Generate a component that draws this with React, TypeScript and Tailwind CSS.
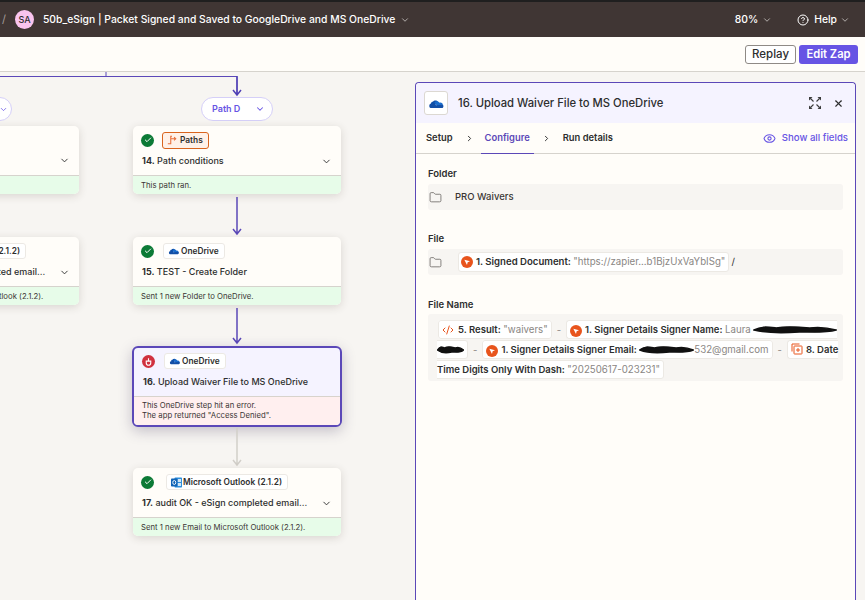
import { ChevronDown, ChevronRight, CircleHelp, CodeXml, Eye, Folder, Check, X } from 'lucide-react'
import type { ReactNode } from 'react'

const font = { fontFamily: 'Inter, "Liberation Sans", sans-serif' }

function OneDriveIcon({ size = 12 }: { size?: number }) {
  return (
    <svg width={size} height={size} viewBox="0 0 24 24" className="shrink-0">
      <path d="M9 16 14 9.500c-1.500-2.500-5.500-2.600-7.200.2C6.300 9.600 5.500 9.800 5 10.300 4.200 11 3.800 12 3.900 13L9 16Z" fill="#0f4fa8" />
      <path d="M9 10.500c1.800-2.400 5.700-2.600 7.400.4 2.200-.6 4.300.8 4.600 2.900L14 17 9 10.500Z" fill="#1a6ccb" />
      <path d="M3.500 12.500C1.500 13.500 1 17.500 3.800 18.500H19.500c1.500 0 3.200-1.800 1.800-4.800L12 14.500 3.500 12.500Z" fill="#134fa6" />
    </svg>
  )
}

function OutlookIcon() {
  return (
    <svg width={11} height={13} viewBox="0 0 22 26" className="shrink-0">
      <rect x="7" y="3" width="15" height="20" rx="1.500" fill="#2f8fdc" />
      <path d="M13 6h7v6h-7zM13 14h7v6h-7z" fill="#cfe6f8" />
      <rect x="0" y="5" width="13" height="16" rx="1.500" fill="#0f63b5" />
      <ellipse cx="6.500" cy="13" rx="3" ry="4" fill="none" stroke="#fff" strokeWidth="1.800" />
    </svg>
  )
}

function PathsIcon() {
  return (
    <svg width="10" height="10" viewBox="0 0 12 12" fill="none" stroke="#e8703c" strokeWidth="1.300" className="shrink-0">
      <path d="M1 10.500h3.500M4.500 11V1.500h1.500M4.500 4.500h6M8.500 2.500l2 2-2 2" />
    </svg>
  )
}

function ExpandIcon() {
  return (
    <svg width="12" height="12" viewBox="0 0 12 12" fill="#3a3a3a" stroke="#3a3a3a" strokeWidth="1.100" className="ml-auto shrink-0">
      <path strokeWidth="0" d="M0 0h3.500L0 3.500ZM12 0v3.500L8.500 0ZM0 12V8.500L3.500 12ZM12 12H8.500L12 8.500Z" />
      <path fill="none" d="M1.500 1.500 4.500 4.500M10.500 1.500 7.500 4.500M1.500 10.500 4.500 7.500M10.500 10.500 7.500 7.500" />
    </svg>
  )
}

function LayersIcon() {
  return (
    <svg width="12" height="12" viewBox="0 0 12 12" fill="none" stroke="#e8541c" strokeWidth="1" className="inline-block align-[-2px] mr-[3px]">
      <path d="M1 8.500V1h7.500" />
      <rect x="3" y="3" width="8" height="8" rx="0.500" />
      <path d="M7 5v4M5 7h4" />
    </svg>
  )
}

function ErrorIcon() {
  return (
    <span className="w-[13px] h-[13px] rounded-full bg-[#d0313f] flex items-center justify-center shrink-0">
      <svg width="9" height="9" viewBox="0 0 12 12" fill="none" stroke="#fff" strokeWidth="1.500">
        <path d="M3 6V4.500M6 5V1.500M9 6V4.500M3 5.500V8c0 1.800 1.300 3 3 3s3-1.200 3-3V5.500H3Z" />
      </svg>
    </span>
  )
}

function ZapierBadge() {
  return (
    <span className="inline-flex w-[12px] h-[12px] rounded-full bg-[#e8541c] items-center justify-center align-[-2px] mr-[3px]">
      <svg width="8" height="8" viewBox="0 0 12 12">
        <path d="M2 2.500 10.500 5 7 6.500 6 10.500Z" fill="#fff" />
      </svg>
    </span>
  )
}

function StatusOk() {
  return (
    <span className="w-[13px] h-[13px] rounded-full bg-[#0c7a36] flex items-center justify-center shrink-0">
      <Check size={8} strokeWidth={3} className="text-white" />
    </span>
  )
}

function Scribble({ width }: { width: number }) {
  return (
    <svg width={width} height="9" viewBox="0 0 80 9" preserveAspectRatio="none" className="inline-block align-[-1px]">
      <path d="M1 5C8 1 14 2 22 3 32 1 44 2 54 3 62 2 72 3 79 5 70 8 56 7 44 7 30 8 12 8 1 5Z" fill="#111" stroke="#111" strokeWidth="1.500" />
    </svg>
  )
}

function Pill({ icon, label }: { icon: ReactNode; label: string }) {
  return (
    <span className="h-[16px] pl-[4px] pr-[5px] flex items-center gap-[1px] rounded-[3px] border border-[#ece9e4] bg-white text-[8.350px] font-semibold text-[#2d2e2e] whitespace-nowrap">
      {icon}
      {label}
    </span>
  )
}

type NodeProps = {
  left: number
  top: number
  num: string
  title: string
  app: ReactNode
  status?: ReactNode
  chevron?: boolean
  foot: ReactNode
  tone?: 'ok' | 'error'
}

function StepCard({ left, top, num, title, app, status, chevron, foot, tone = 'ok' }: NodeProps) {
  const isError = tone === 'error'
  return (
    <div
      className={
        isError
          ? 'absolute w-[210px] h-[81px] rounded-[6px] border-2 border-[#5b48b8] bg-[#f5f3ff] shadow-[0_4px_14px_rgba(60,50,90,0.28)] overflow-hidden flex flex-col'
          : 'absolute w-[208px] h-[68px] rounded-[5px] bg-[#fffdf9] shadow-[0_2px_8px_rgba(60,50,40,0.16)] overflow-hidden flex flex-col'
      }
      style={{ left, top }}
    >
      <div className="flex-1 px-[8px] min-h-0">
        <div className={isError ? 'flex items-center gap-[9px] mt-[4px] h-[18px]' : 'flex items-center gap-[9px] mt-[6px] h-[16px]'}>
          {status ?? <StatusOk />}
          {app}
        </div>
        <div className={`flex items-center justify-between pl-[1px] pr-[1px] text-[9px] font-medium text-[#2d2e2e] leading-[12px] whitespace-nowrap ${isError ? 'mt-[6px]' : 'mt-[7px]'}`}>
          <span>
            <b className="font-bold">{num}</b> {title}
          </span>
          {chevron && <ChevronDown size={11} strokeWidth={2} className="text-[#2d2e2e]" />}
        </div>
      </div>
      <div
        className={
          isError
            ? 'h-[29px] border-t border-[#d8d3cc] bg-[#ffefef] px-[8px] pt-[3px] text-[7.750px] leading-[10px] text-[#3a3534]'
            : 'h-[19px] border-t border-[#d6d3cd] bg-[#e7fce9] px-[8px] pt-[1px] flex items-center text-[7.750px] text-[#3a3534] whitespace-nowrap'
        }
      >
        <div>{foot}</div>
      </div>
    </div>
  )
}

function Connector({ x, y1, y2, color }: { x: number; y1: number; y2: number; color: string }) {
  return (
    <svg className="absolute left-0 top-0 overflow-visible" width="1" height="1">
      <path d={`M${x} ${y1}V${y2}M${x - 4} ${y2 - 5}L${x} ${y2}L${x + 4} ${y2 - 5}`} fill="none" stroke={color} strokeWidth="1.500" />
    </svg>
  )
}

function Token({ children }: { children: ReactNode }) {
  return (
    <span className="border border-[#ece9e4] bg-white rounded-[3px] px-[3px] py-[3px] text-[#2d2e2e] font-medium">
      {children}
    </span>
  )
}

function Value({ children }: { children: ReactNode }) {
  return <span className="font-normal text-[9.700px] text-[#8a8683]">{children}</span>
}

function FieldLabel({ children }: { children: ReactNode }) {
  return <div className="text-[9.500px] font-semibold text-[#2d2e2e] leading-[12px] mb-[4px]">{children}</div>
}

export default function App() {
  return (
    <div className="w-[865px] h-[600px] overflow-hidden flex flex-col bg-[#f7f5f2]" style={font}>
      {/* Top bar */}
      <header className="h-[37px] shrink-0 bg-[#403634] border-t-2 border-[#1f1f1f] flex items-center text-white">
        <span className="ml-[2px] text-[#a39c9a] text-[11px]">/</span>
        <span className="ml-[9px] w-[19px] h-[19px] rounded-full bg-[#f9c4ee] text-[#2d2e2e] text-[9px] font-medium flex items-center justify-center">SA</span>
        <span className="ml-[9px] text-[10.350px] font-medium whitespace-nowrap">50b_eSign | Packet Signed and Saved to GoogleDrive and MS OneDrive</span>
        <ChevronDown size={10} className="ml-[5px] text-[#c9c4c2]" />
        <span className="ml-auto text-[10.350px] font-medium">80%</span>
        <ChevronDown size={10} className="ml-[4px] text-[#c9c4c2]" />
        <CircleHelp size={12} className="ml-[25px]" />
        <span className="ml-[5px] text-[10.350px] font-medium">Help</span>
        <ChevronDown size={10} className="ml-[3px] mr-[15px] text-[#c9c4c2]" />
      </header>

      {/* Toolbar */}
      <div className="h-[35px] shrink-0 bg-[#fffdf9] border-b border-[#d6d3cd] flex items-center justify-end gap-[3px] pr-[7px] pt-[1px]">
        <button className="h-[19px] w-[51px] rounded-[3px] border border-[#8f8a86] bg-white text-[11.500px] font-medium text-[#2d2e2e]">Replay</button>
        <button className="h-[19px] w-[59px] rounded-[3px] bg-[#6754e4] text-[11.200px] font-semibold text-white">Edit Zap</button>
      </div>

      <div className="flex-1 flex min-h-0">
        {/* Canvas */}
        <div className="relative w-[415px] shrink-0 overflow-hidden bg-[radial-gradient(#f0eeea_0.7px,transparent_0.7px)] [background-size:10px_10px]">
          <svg className="absolute left-0 top-0 overflow-visible" width="1" height="1">
            <path d="M106 0V4M0 4.500H237V21" fill="none" stroke="#5b48b8" strokeWidth="1" />
          </svg>
          <Connector x={237} y1={4} y2={23} color="#4f3fb5" />

          <div className="absolute left-[-60px] top-[25px] w-[72px] h-[24px] rounded-full border border-[#d5cff8] bg-white flex items-center justify-end pr-[3px]">
            <ChevronDown size={9} className="text-[#6754e4]" />
          </div>
          <div className="absolute left-[201px] top-[25px] w-[72px] h-[24px] rounded-full border border-[#d5cff8] bg-white flex items-center justify-between pl-[10px] pr-[7px] text-[9px] font-semibold text-[#6754e4]">
            Path D
            <ChevronDown size={10} strokeWidth={2.500} />
          </div>

          <StepCard left={-129} top={54} num="" title="" chevron app={<span />} foot="" />
          <StepCard
            left={-129}
            top={165}
            num="17."
            title="audit OK - eSign completed email..."
            chevron
            app={<span className="ml-[3px]"><Pill icon={<OutlookIcon />} label="Microsoft Outlook (2.1.2)" /></span>}
            foot="Sent 1 new Email to Microsoft Outlook (2.1.2)."
          />

          <StepCard
            left={133}
            top={54}
            num="14."
            title="Path conditions"
            chevron
            app={
              <span className="h-[17px] ml-[-1px] pl-[4px] pr-[5px] flex items-center gap-[3px] rounded-[3px] border border-[#d9641e] bg-[#fff1e8] text-[8.350px] font-semibold text-[#2d2e2e]">
                <PathsIcon />
                Paths
              </span>
            }
            foot="This path ran."
          />
          <Connector x={237} y1={125} y2={162} color="#5b48b8" />
          <StepCard
            left={133}
            top={165}
            num="15."
            title="TEST - Create Folder"
            app={<Pill icon={<OneDriveIcon />} label="OneDrive" />}
            foot="Sent 1 new Folder to OneDrive."
          />
          <Connector x={237} y1={236} y2={271} color="#5b48b8" />
          <StepCard
            left={132}
            top={274}
            num="16."
            title="Upload Waiver File to MS OneDrive"
            tone="error"
            status={<ErrorIcon />}
            app={<Pill icon={<OneDriveIcon />} label="OneDrive" />}
            foot={
              <>
                This OneDrive step hit an error.
                <br />
                The app returned "Access Denied".
              </>
            }
          />
          <Connector x={237} y1={356} y2={393} color="#d2cfc9" />
          <StepCard
            left={133}
            top={396}
            num="17."
            title="audit OK - eSign completed email..."
            chevron
            app={<span className="ml-[3px]"><Pill icon={<OutlookIcon />} label="Microsoft Outlook (2.1.2)" /></span>}
            foot="Sent 1 new Email to Microsoft Outlook (2.1.2)."
          />
        </div>

        {/* Detail panel */}
        <aside className="mt-[10px] w-[441px] shrink-0 rounded-t-[4px] border border-b-0 border-[#5b48b8] bg-[#fffdf9] flex flex-col text-[#2d2e2e]">
          <div className="h-[40px] shrink-0 bg-[#f5f3ff] rounded-t-[4px] flex items-center pl-[8px] pr-[11px]">
            <span className="w-[24px] h-[24px] rounded-[3px] border border-[#dcd8d2] bg-white flex items-center justify-center">
              <OneDriveIcon size={17} />
            </span>
            <span className="ml-[10px] text-[11.250px] font-medium">16. Upload Waiver File to MS OneDrive</span>
            <ExpandIcon />
            <X size={11} strokeWidth={2.500} className="ml-[12px]" />
          </div>
          <div className="h-[31px] shrink-0 border-b border-[#d6d3cd] flex items-stretch pl-[10px] pr-[7px] pt-[1px] text-[9.400px] font-semibold">
            <span className="flex items-center">Setup</span>
            <span className="flex items-center ml-[12px] mr-[7px]"><ChevronRight size={9} strokeWidth={2.500} /></span>
            <span className="flex items-center px-[4px] text-[#5b48b8] border-b border-[#5b48b8] mb-[-1px]">Configure</span>
            <span className="flex items-center ml-[8px] mr-[12px]"><ChevronRight size={9} strokeWidth={2.500} /></span>
            <span className="flex items-center">Run details</span>
            <span className="ml-auto flex items-center gap-[6px] text-[#6754e4] font-medium text-[9.600px]">
              <Eye size={13} />
              Show all fields
            </span>
          </div>

          <div className="pl-[12px] pr-[12px] pt-[14px]">
            <FieldLabel>Folder</FieldLabel>
            <div className="h-[26px] bg-[#f7f5f2] rounded-[3px] flex items-center text-[9.500px] font-medium text-[#3a3534]">
              <Folder size={13} strokeWidth={1.500} className="ml-[1px] text-[#6b6764]" />
              <span className="ml-[13px]">PRO Waivers</span>
            </div>

            <div className="mt-[23px]">
              <FieldLabel>File</FieldLabel>
              <div className="h-[26px] bg-[#f7f5f2] rounded-[3px] flex items-center text-[9.600px]">
                <Folder size={13} strokeWidth={1.500} className="ml-[1px] text-[#6b6764]" />
                <span className="ml-[16px] h-[20px] pl-[2px] pr-[3px] flex items-center rounded-[3px] border border-[#ece9e4] bg-white font-semibold whitespace-nowrap">
                  <ZapierBadge />
                  1. Signed Document:&nbsp;<Value>"https://zapier...b1BjzUxVaYbISg"</Value>
                </span>
                <span className="ml-[2px]">/</span>
              </div>
            </div>

            <div className="mt-[24px]">
              <FieldLabel>File Name</FieldLabel>
              <div className="h-[67px] mt-[-1px] bg-[#f7f5f2] rounded-[3px] pl-[9px] pr-[2px] pt-[6px] text-[9.500px] leading-[20px] overflow-hidden">
                <span className="ml-[1px]">
                  <Token>
                    <CodeXml size={12} className="inline-block align-[-3px] mr-[4px] text-[#e8541c]" />
                    <b className="font-semibold">5. Result:</b> <Value>"waivers"</Value>
                  </Token>
                </span>
                <span className="mx-[5px] text-[#8a8683]">-</span>
                <Token>
                  <ZapierBadge />
                  <b className="font-semibold">1. Signer Details Signer Name:</b> <Value>Laura</Value> <Scribble width={84} /> <Scribble width={27} />
                </Token>
                <span className="mx-[5px] text-[#8a8683]">-</span>
                <Token>
                  <ZapierBadge />
                  <b className="font-semibold">1. Signer Details Signer Email:</b> <Scribble width={55} /><Value>532@gmail.com</Value>
                </Token>
                <span className="mx-[5px] text-[#8a8683]">-</span>
                <Token>
                  <LayersIcon />
                  <b className="font-semibold">8. Date Time Digits Only With Dash:</b> <Value>"20250617-023231"</Value>
                </Token>
              </div>
            </div>
          </div>
        </aside>
      </div>
    </div>
  )
}
